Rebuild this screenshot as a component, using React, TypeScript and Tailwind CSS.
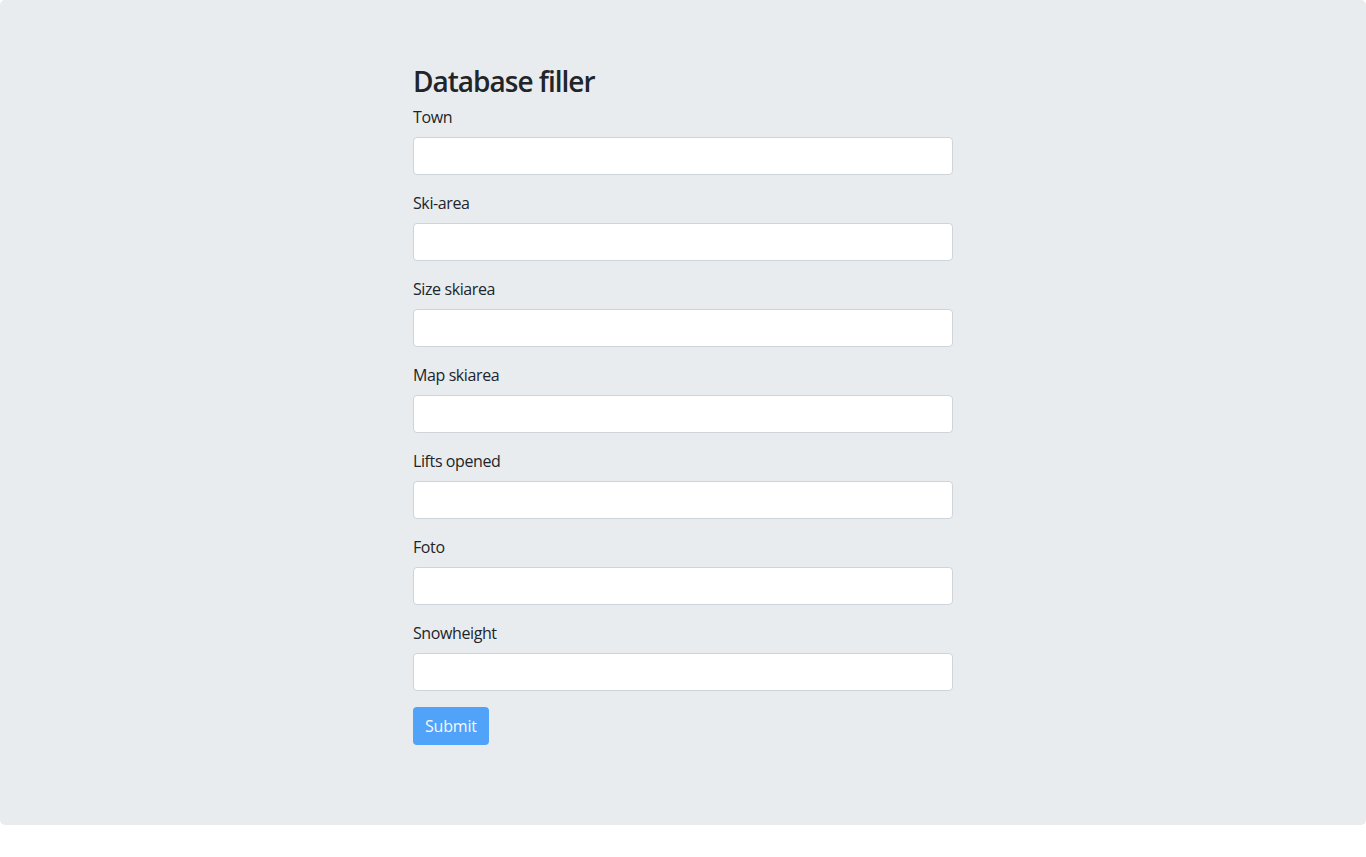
const FIELDS = ["Town", "Ski-area", "Size skiarea", "Map skiarea", "Lifts opened", "Foto", "Snowheight"];

export default function App() {
  return (
    <div className="min-h-[857px] bg-white text-[#212529] font-['Segoe_UI','Open_Sans',sans-serif]">
      <div className="bg-[#e9ecef] rounded-[5px] pt-[63px] pb-20">
        <div className="w-[540px] ml-[413px]">
          <h3 className="text-[28px] leading-[1.2] font-semibold tracking-[-1px] pt-[2px] mb-[6px]">Database filler</h3>
          <form onSubmit={(e) => e.preventDefault()}>
            {FIELDS.map((label) => (
              <div key={label} className="mb-4">
                <label className="block text-base leading-6 tracking-[-0.4px] mb-2">{label}</label>
                <input
                  type="text"
                  className="block w-full h-[38px] px-3 bg-white border border-[#ced4da] rounded-[4px] outline-none"
                />
              </div>
            ))}
            <button
              type="submit"
              disabled
              className="h-[38px] px-3 bg-[#007bff] text-white text-base leading-6 tracking-[-0.2px] rounded-[4px] opacity-65"
            >
              Submit
            </button>
          </form>
        </div>
      </div>
    </div>
  );
}
